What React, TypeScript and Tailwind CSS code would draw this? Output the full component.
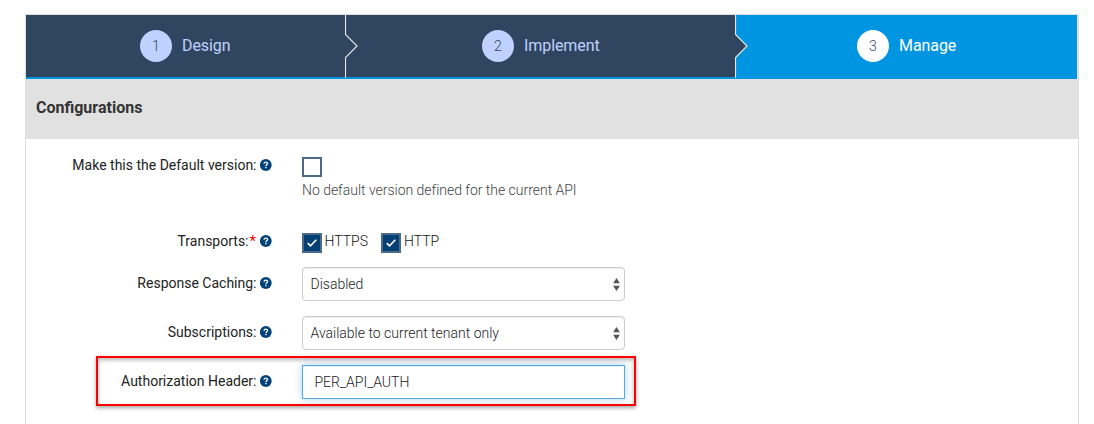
import type { ReactNode } from "react";

function Divider() {
  return (
    <svg
      className="absolute -right-[13px] top-0 z-10"
      width="14"
      height="64"
      viewBox="0 0 14 64"
      fill="none"
    >
      <path d="M0 19.5 L12 31 L0 42.5 Z" fill="#30455f" />
      <path d="M0.5 0 V19.5 L12 31 L0.5 42.5 V63" stroke="#e8eaed" strokeWidth="1.15" />
    </svg>
  );
}

function HelpIcon() {
  return (
    <svg className="ml-[3px] mt-[0.5px] size-3" viewBox="0 0 12 12" fill="none">
      <circle cx="5.8" cy="6" r="5.9" fill="#04427a" />
      <path
        d="M4 4.7 C4.1 3.6 4.9 3.1 5.8 3.1 C6.8 3.1 7.6 3.7 7.6 4.6 C7.6 5.7 5.9 5.8 5.9 7"
        stroke="#fff"
        strokeWidth="1.35"
      />
      <rect x="5.2" y="7.8" width="1.4" height="1.4" fill="#fff" />
    </svg>
  );
}

function Step({ n, label, className, active = false }: { n: number; label: string; className: string; active?: boolean }) {
  return (
    <div
      className={`relative flex h-16 border-b-2 border-[#0095e0] pt-[15px] ${
        active ? "bg-[#0095e0] text-white" : "bg-[#30455f] text-[#bfd2ff]"
      } ${className}`}
    >
      <span
        className={`flex size-8 items-center justify-center rounded-full text-sm font-light text-[#30455f] ${
          active ? "bg-white" : "bg-[#bfd2ff]"
        }`}
      >
        {n}
      </span>
      <span className="ml-[10px] text-base leading-[31px] tracking-[-0.005em]">{label}</span>
      {!active && <Divider />}
    </div>
  );
}

function Row({ label, required, className, children }: { label: string; required?: boolean; className: string; children: ReactNode }) {
  return (
    <div className={`flex items-start ${className}`}>
      <div className="flex h-[34px] w-[246px] items-center justify-end pr-[0.5px] text-sm text-[#222]">
        <span>{label}</span>
        {required && <span className="ml-px w-[7px] text-[15px] leading-5 text-[#f00]">*</span>}
        <HelpIcon />
      </div>
      <div className="ml-[30px] w-[323px] text-sm text-[#444]">{children}</div>
    </div>
  );
}

function Checkbox({ checked = false }: { checked?: boolean }) {
  return (
    <span
      className={`flex size-5 items-center justify-center border-2 border-[#4c6a8a] ${
        checked ? "bg-[#044075]" : "bg-white"
      }`}
    >
      {checked && (
        <svg width="12" height="10" viewBox="0 0 12 10" fill="none">
          <path d="M1.7 5.2 L4.5 7.9 L10.3 1.8" stroke="#fff" strokeWidth="1.6" />
        </svg>
      )}
    </span>
  );
}

function Select({ value }: { value: string }) {
  return (
    <div className="mt-px flex h-[34px] items-center justify-between rounded-[4px] border border-[#ccc] bg-white pl-[7.5px] pr-[4px] font-light text-[#222] shadow-[inset_0_1px_1px_rgba(0,0,0,0.075)]">
      <span>{value}</span>
      <svg width="7" height="13" viewBox="0 0 7 13" fill="#555">
        <path d="M3.5 0 L6.9 5.2 H0.1 Z M3.5 13 L0.1 7.8 H6.9 Z" />
      </svg>
    </div>
  );
}

export default function App() {
  return (
    <div className="h-[424px] overflow-hidden bg-white pl-[25px] pt-[14px] font-['Roboto',sans-serif]">
      <div className="relative h-[440px] w-[1054px] border border-[#ddd]">
        <div className="flex bg-[#e1e1e1]">
          <Step n={1} label="Design" className="w-[320px] pl-[114px]" />
          <Step n={2} label="Implement" className="w-[390px] pl-[136px]" />
          <Step n={3} label="Manage" className="w-[341px] pl-[121px]" active />
        </div>
        <div className="flex h-[60px] items-center bg-[#e1e1e1] pb-[3px] pl-[10px] text-base font-bold text-[#333]">
          Configurations
        </div>
        <div className="pt-[9px]">
          <Row label="Make this the Default version:" className="h-[76px]">
            <div className="pt-[9px]">
              <Checkbox />
              <p className="mt-[3px] leading-5 font-light tracking-[-0.02px] text-[#444]">No default version defined for the current API</p>
            </div>
          </Row>
          <Row label="Transports:" required className="h-[42px]">
            <div className="flex pt-[9px] font-light leading-[17px] text-[#111]">
              <Checkbox checked />
              <span className="ml-[2.5px] w-[56.5px]">HTTPS</span>
              <Checkbox checked />
              <span className="ml-[3px]">HTTP</span>
            </div>
          </Row>
          <Row label="Response Caching:" className="h-[49px]">
            <Select value="Disabled" />
          </Row>
          <Row label="Subscriptions:" className="h-[49px]">
            <Select value="Available to current tenant only" />
          </Row>
          <Row label="Authorization Header:" className="h-[49px]">
            <input
              className="mt-px block h-[34px] w-full border border-[#52a8ec] bg-white px-[11.5px] font-light text-[#222] shadow-[inset_0_1px_1px_rgba(0,0,0,0.075),0_0_8px_rgba(102,175,233,0.5)] outline-none"
              defaultValue="PER_API_AUTH"
            />
          </Row>
        </div>
        <div className="pointer-events-none absolute left-[70px] top-[341px] h-[50px] w-[540px] border-2 border-[#ff0000] shadow-[0_2px_4px_rgba(0,0,0,0.35),inset_0_2px_4px_rgba(0,0,0,0.3)]" />
      </div>
    </div>
  );
}
